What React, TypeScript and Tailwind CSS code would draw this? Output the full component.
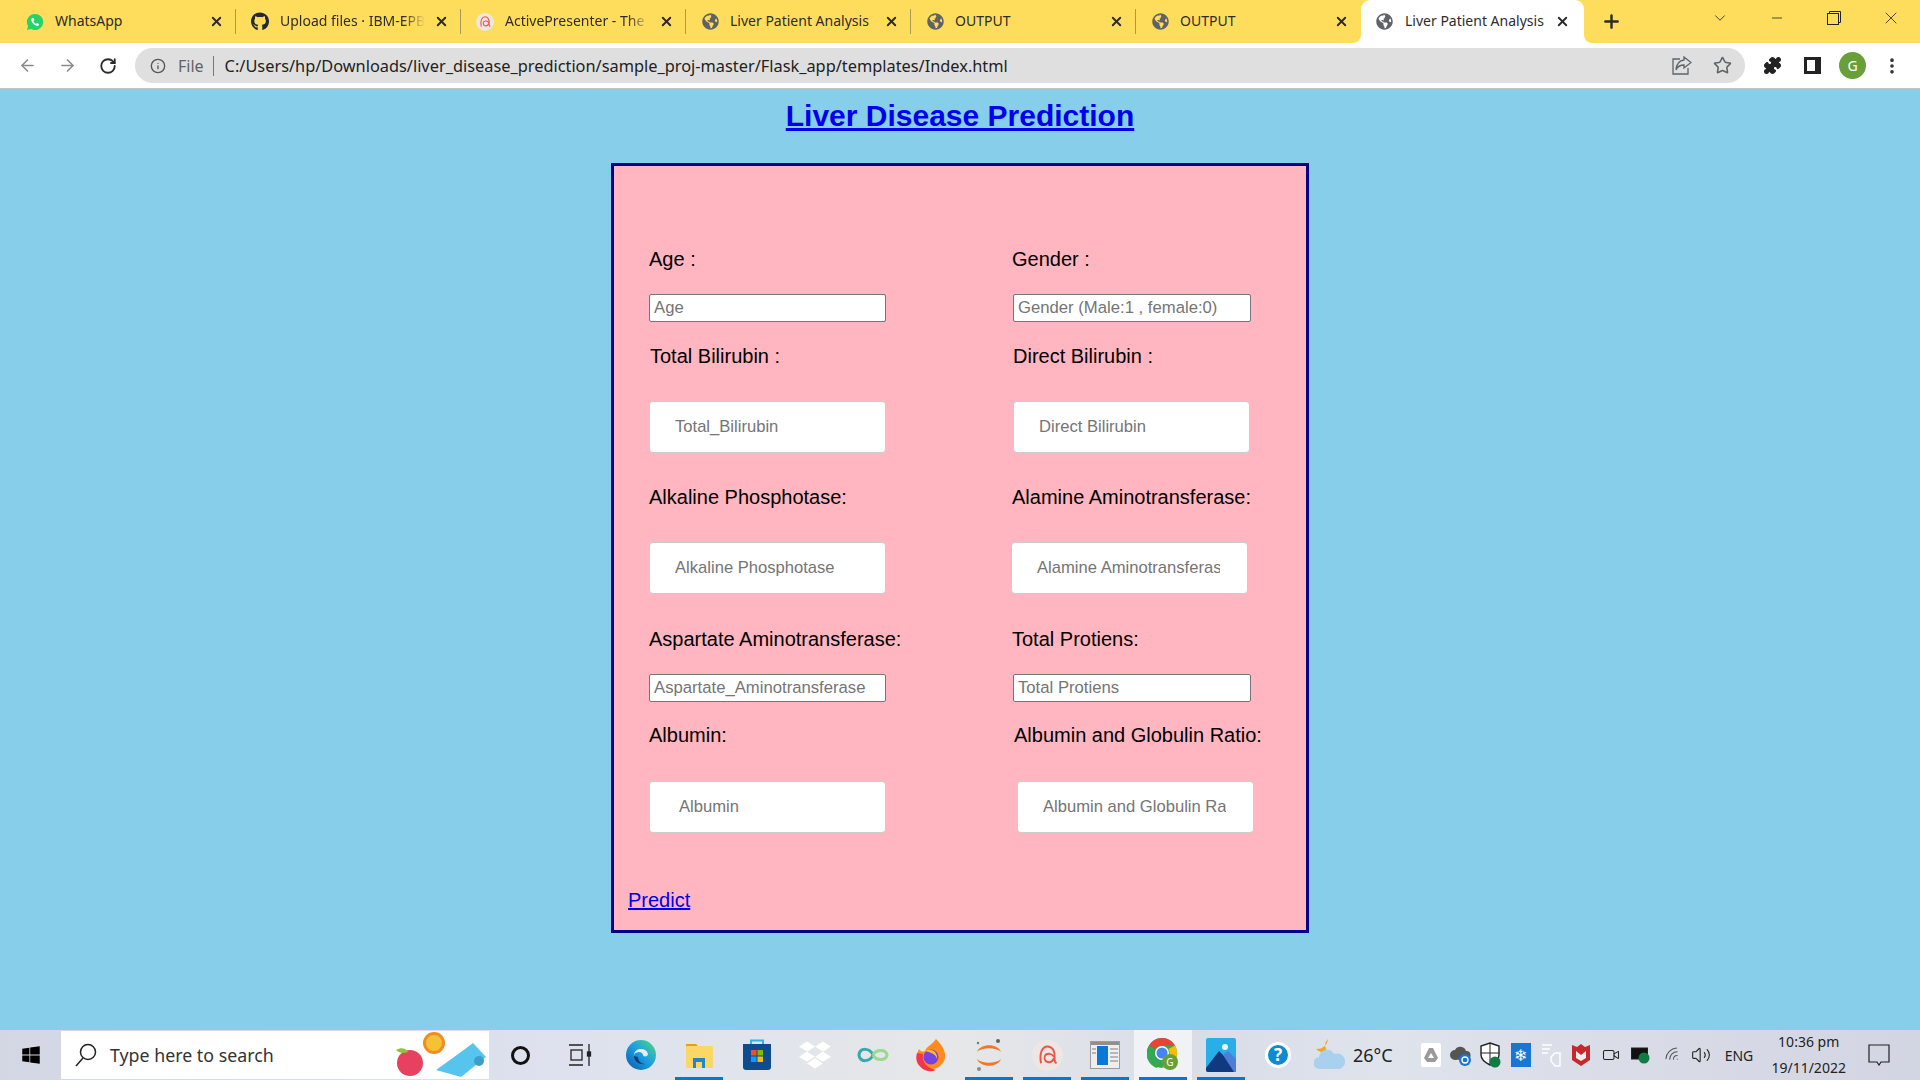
import { ArrowLeft, ArrowRight, RotateCw, Info, Star, X, Plus, ChevronDown, Minus, MoreVertical, Puzzle, Volume2, Wifi, Video } from "lucide-react";
import { FaGithub, FaGlobeAmericas, FaWindows, FaDropbox } from "react-icons/fa";

const uiFont = "[font-family:'Noto_Sans',sans-serif]";
const arial = "[font-family:'Liberation_Sans',Arial,sans-serif]";

function WhatsappIcon() {
  return (
    <svg width="20" height="20" viewBox="0 0 20 20">
      <path d="M10 1 a9 9 0 1 1 -4.4 16.8 L1 19 L2.3 14.6 A9 9 0 0 1 10 1Z" fill="#25d366" />
      <path d="M7 5.5 C5.5 6.5 5.5 8.5 7.5 11.5 C9.5 14 12.5 15 14 13.8 L14.5 12.5 L12.3 11.2 L11.3 12.2 C10 11.7 8.8 10.3 8.2 9 L9.2 8 L8.2 5.5Z" fill="#fff" />
    </svg>
  );
}

function ApIcon({ size }: { size: number }) {
  return (
    <svg width={size} height={size} viewBox="0 0 24 24">
      <circle cx="12" cy="12" r="12" fill="#ede6e3" />
      <path d="M7 18 C5.5 10 8 5 12 5 C16 5 18 9 17.5 14 C17.3 16 18 17.5 19 18 M17 14 C16 16.5 14 17.5 12 17 C9.5 16.5 9 13 10.5 11.5 C12.5 10 15.5 10.5 17 13" fill="none" stroke="#e8574a" strokeWidth="1.5" />
    </svg>
  );
}

const tabs = [
  { title: "WhatsApp", icon: <WhatsappIcon /> },
  { title: "Upload files · IBM-EPB", icon: <FaGithub size={19} className="text-[#24292e]" /> },
  { title: "ActivePresenter - The", icon: <ApIcon size={18} /> },
  { title: "Liver Patient Analysis", icon: <FaGlobeAmericas size={17} className="text-[#5f6368]" /> },
  { title: "OUTPUT", icon: <FaGlobeAmericas size={17} className="text-[#5f6368]" /> },
  { title: "OUTPUT", icon: <FaGlobeAmericas size={17} className="text-[#5f6368]" /> },
];

function TabBar() {
  return (
    <div className="flex h-[43px] bg-[#ffdd5c] pl-[11px]">
      {tabs.map((t, i) => (
        <div key={i} className="flex h-full w-[225px] shrink-0 items-center pl-[15px]">
          <span className="flex w-[18px] shrink-0 justify-center">{t.icon}</span>
          <span className={`mb-[2px] ml-[11px] w-[145px] overflow-hidden whitespace-nowrap text-[14px] text-[#2c2c2c] ${i === 1 || i === 2 ? "[mask-image:linear-gradient(to_right,black_85%,transparent)]" : ""}`}>
            {t.title}
          </span>
          <X size={15} strokeWidth={3} className="ml-[9px] shrink-0 text-[#2b2b2b]" />
          <span className={`ml-[11px] h-[25px] w-px shrink-0 ${i === 5 ? "" : "bg-[#a89a55]"}`} />
        </div>
      ))}
      <div className="relative flex h-full w-[223px] shrink-0 items-center rounded-t-[9px] bg-white pl-[15px]">
        <span className="absolute -left-2 bottom-0 h-2 w-2 bg-white">
          <span className="block h-full w-full rounded-br-[8px] bg-[#ffdd5c]" />
        </span>
        <span className="absolute -right-2 bottom-0 h-2 w-2 bg-white">
          <span className="block h-full w-full rounded-bl-[8px] bg-[#ffdd5c]" />
        </span>
        <FaGlobeAmericas size={17} className="shrink-0 text-[#5f6368]" />
        <span className="mb-[2px] ml-[12px] w-[141px] whitespace-nowrap text-[14px] text-[#2c2c2c]">Liver Patient Analysis</span>
        <X size={15} strokeWidth={3} className="ml-[9px] shrink-0 text-[#2b2b2b]" />
      </div>
      <Plus size={21} strokeWidth={2.8} className="ml-[17px] mt-[11px] shrink-0 text-[#2b2b2b]" />
      <ChevronDown size={18} strokeWidth={1.2} className="ml-[89px] mt-[9px] shrink-0 text-[#333]" />
      <div className="ml-[19px] flex h-[36px] shrink-0 items-center">
        <span className="flex w-[57px] justify-center"><Minus size={16} strokeWidth={1.2} className="text-[#222]" /></span>
        <span className="flex w-[57px] justify-center">
          <svg width="14" height="14" viewBox="0 0 14 14" fill="none" stroke="#222" strokeWidth="1">
            <rect x="0.5" y="2.5" width="11" height="11" />
            <path d="M2.5 2.5 V0.5 H13.5 V11.5 H11.5" />
          </svg>
        </span>
        <span className="flex w-[58px] justify-center"><X size={20} strokeWidth={1} className="text-[#222]" /></span>
      </div>
    </div>
  );
}

function ToolBar() {
  return (
    <div className="flex h-[46px] items-center border-b border-[#c4c4c4] bg-white pl-[18px]">
      <ArrowLeft size={19} strokeWidth={2} className="shrink-0 text-[#8a8a8a]" />
      <ArrowRight size={19} strokeWidth={2} className="ml-[21px] shrink-0 text-[#8a8a8a]" />
      <RotateCw size={18} strokeWidth={2.4} className="ml-[22px] shrink-0 text-[#2b2b2b]" />
      <div className="ml-[18px] flex h-[35px] w-[1610px] shrink-0 items-center rounded-full bg-[#dfdfdf] pl-[15px]">
        <Info size={16} strokeWidth={2} className="text-[#555]" />
        <span className="ml-[12px] pt-[1px] text-[16px] text-[#5f6368]">File</span>
        <span className="ml-[9px] h-[20px] w-px bg-[#777]" />
        <span className="ml-[11px] whitespace-nowrap pt-[1px] text-[16.35px] text-[#222]">
          C:/Users/hp/Downloads/liver_disease_prediction/sample_proj-master/Flask_app/templates/Index.html
        </span>
        <svg width="20" height="19" viewBox="0 0 20 19" fill="none" stroke="#5f6368" strokeWidth="1.3" className="ml-auto">
          <path d="M8 3 H1 V18 H16 V12" />
          <path d="M12 1 L19 6.5 L12 12 V9 C8 9 5.5 10.5 4 14 C4.5 8.5 7.5 4.5 12 4Z" />
        </svg>
        <Star size={19} strokeWidth={2} className="ml-[21px] mr-[13px] text-[#5f6368]" />
      </div>
      <Puzzle size={19} fill="#222" strokeWidth={1.5} className="ml-[18px] shrink-0 text-[#222]" />
      <span className="ml-[22px] flex h-[17px] w-[17px] shrink-0 justify-start border-[3px] border-[#222]">
        <span className="h-full w-[8px] bg-white" />
        <span className="h-full w-[3px] bg-[#222]" />
      </span>
      <span className="ml-[18px] flex h-[27px] w-[27px] shrink-0 items-center justify-center rounded-full bg-[#689f38] text-[14px] text-white">G</span>
      <MoreVertical size={20} strokeWidth={2.4} className="ml-[16px] shrink-0 text-[#333]" />
    </div>
  );
}

type FieldProps = { label: string; placeholder: string; big?: boolean; labelCls?: string; boxCls?: string; gapCls: string };

function Field({ label, placeholder, big, labelCls = "", boxCls = "", gapCls }: FieldProps) {
  return (
    <div className="flex flex-col items-start">
      <label className={`block whitespace-nowrap text-[20px] leading-[23px] text-black ${labelCls}`}>{label}</label>
      {big ? (
        <input
          readOnly
          placeholder={placeholder}
          className={`${gapCls} h-[52px] w-[237px] rounded-[4px] border border-[#ccc] bg-white pr-[27px] text-[16.6px] outline-none placeholder:text-[#757575] ${boxCls || "pl-[25px]"}`}
        />
      ) : (
        <input
          readOnly
          placeholder={placeholder}
          className={`${gapCls} h-[28px] rounded-[2px] border border-[#767676] bg-white px-[4px] pb-[1px] text-[16.7px] outline-none placeholder:text-[#757575] ${boxCls || "w-[237px]"}`}
        />
      )}
    </div>
  );
}

function Panel() {
  return (
    <div className={`mx-auto mt-[30px] h-[770px] w-[698px] border-[3px] border-[#00008b] bg-[#ffb6c1] pt-[82px] ${arial}`}>
      <div className="flex pl-[35px]">
        <div className="w-[363px]"><Field label="Age :" placeholder="Age" gapCls="mt-[23px]" /></div>
        <Field label="Gender :" placeholder="Gender (Male:1 , female:0)" boxCls="w-[238px]" gapCls="mt-[23px] ml-[1px]" />
      </div>
      <div className="mt-[23px] flex pl-[35px]">
        <div className="w-[363px]"><Field label="Total Bilirubin :" placeholder="Total_Bilirubin" big labelCls="ml-[1px]" gapCls="mt-[33px]" /></div>
        <Field label="Direct Bilirubin :" placeholder="Direct Bilirubin" big labelCls="ml-[1px]" gapCls="mt-[33px] ml-[1px]" />
      </div>
      <div className="mt-[33px] flex pl-[35px]">
        <div className="w-[363px]"><Field label="Alkaline Phosphotase:" placeholder="Alkaline Phosphotase" big gapCls="mt-[33px]" /></div>
        <Field label="Alamine Aminotransferase:" placeholder="Alamine Aminotransferase" big gapCls="mt-[33px] ml-[-1px]" />
      </div>
      <div className="mt-[34px] flex pl-[35px]">
        <div className="w-[363px]"><Field label="Aspartate Aminotransferase:" placeholder="Aspartate_Aminotransferase" gapCls="mt-[23px]" /></div>
        <Field label="Total Protiens:" placeholder="Total Protiens" boxCls="w-[238px]" gapCls="mt-[23px] ml-[1px]" />
      </div>
      <div className="mt-[22px] flex pl-[35px]">
        <div className="w-[363px]"><Field label="Albumin:" placeholder="Albumin" big boxCls="pl-[29px]" gapCls="mt-[34px]" /></div>
        <Field label="Albumin and Globulin Ratio:" placeholder="Albumin and Globulin Ratio" big labelCls="ml-[2px]" gapCls="mt-[34px] ml-[5px]" />
      </div>
      <a href="#" className="ml-[14px] mt-[56px] block w-fit text-[20px] leading-[23px] text-[#0000ee] underline">Predict</a>
    </div>
  );
}

function ChromeLogo() {
  return (
    <svg width="32" height="34" viewBox="0 0 32 34">
      <circle cx="15" cy="15" r="15" fill="#34a853" />
      <path d="M15 0 A15 15 0 0 1 28 7.5 H15 A7.5 7.5 0 0 0 8.5 11 L2 7.5 A15 15 0 0 1 15 0Z" fill="#ea4335" />
      <path d="M28 7.5 A15 15 0 0 1 15 30 L21.5 18.7 A7.5 7.5 0 0 0 21.5 11Z" fill="#fbbc05" />
      <path d="M2 7.5 L8.5 18.7 A7.5 7.5 0 0 0 15 22.5 L10 30 A15 15 0 0 1 2 7.5Z" fill="#34a853" />
      <circle cx="15" cy="15" r="7" fill="#fff" />
      <circle cx="15" cy="15" r="5.5" fill="#4285f4" />
      <circle cx="23" cy="24" r="8" fill="#689f38" />
      <text x="23" y="28" textAnchor="middle" fontSize="10" fill="#fff">G</text>
    </svg>
  );
}

function EdgeLogo() {
  return (
    <svg width="32" height="32" viewBox="0 0 32 32">
      <defs>
        <linearGradient id="edge" x1="0" y1="1" x2="1" y2="0">
          <stop offset="0" stopColor="#0c59a4" />
          <stop offset="0.5" stopColor="#1b9de2" />
          <stop offset="1" stopColor="#4fdc7c" />
        </linearGradient>
      </defs>
      <circle cx="16" cy="16" r="15" fill="url(#edge)" />
      <path d="M9 17 a7 6 0 0 1 14 -2 c0 3 -5 3 -5 1 a4 3 0 0 0 -9 1Z" fill="#e8eef6" />
      <path d="M9 17 c0 6 6 9 11 8 c-4 0 -7 -3 -7 -7 Z" fill="#0a3f80" />
    </svg>
  );
}

function FolderIcon() {
  return (
    <svg width="28" height="28" viewBox="0 0 28 28">
      <path d="M1 3 H11 L14 6 H1Z" fill="#e0a30b" />
      <rect x="1" y="5" width="27" height="22" rx="1" fill="#fdd766" />
      <path d="M8 27 V17 H20 V27 H17 V21 H11 V27Z" fill="#1f86d0" />
    </svg>
  );
}

function StoreIcon() {
  return (
    <svg width="30" height="32" viewBox="0 0 30 32">
      <path d="M9 5 V1.5 H21 V5" fill="none" stroke="#2ab5ee" strokeWidth="2" />
      <path d="M1 5 H29 V28 a3 3 0 0 1 -3 3 H4 a3 3 0 0 1 -3 -3Z" fill="#0f4c8f" />
      <rect x="9" y="11" width="5.5" height="5.5" fill="#f25022" />
      <rect x="15.5" y="11" width="5.5" height="5.5" fill="#7fba00" />
      <rect x="9" y="17.5" width="5.5" height="5.5" fill="#00a4ef" />
      <rect x="15.5" y="17.5" width="5.5" height="5.5" fill="#ffb900" />
    </svg>
  );
}

function InfinityIcon() {
  return (
    <svg width="32" height="20" viewBox="0 0 32 20" fill="none" strokeWidth="3">
      <path d="M16 10 C13 3 3 2 2 10 C3 18 13 17 16 10" stroke="#3aa6ad" />
      <path d="M16 10 C19 4 29 4 30 10 C29 16 19 16 16 10" stroke="#9cd98f" />
    </svg>
  );
}

function FirefoxIcon() {
  return (
    <svg width="30" height="34" viewBox="0 0 30 34">
      <path d="M20 1 C27 8 30 14 29 20 A14 13.5 0 1 1 3 11 C5 14 7 14 9 13 C11 8 16 7 20 1Z" fill="#ff8a1e" />
      <path d="M1 15 A14 14 0 0 0 20 32 C10 30 6 24 7 16Z" fill="#f3364c" />
      <circle cx="15" cy="19" r="7.5" fill="#7542e5" />
      <path d="M9 13 C14 10 22 13 21 21 C20 16 14 14 9 13Z" fill="#ffbd2e" />
    </svg>
  );
}

function JupyterIcon() {
  return (
    <svg width="30" height="36" viewBox="0 0 30 36">
      <path d="M3 15 C6 6 24 6 27 15 C22 10 8 10 3 15Z" fill="#f37726" />
      <path d="M3 22 C6 31 24 31 27 22 C22 27 8 27 3 22Z" fill="#f37726" />
      <circle cx="24" cy="4" r="2" fill="#616262" />
      <circle cx="4" cy="6" r="1.2" fill="#757575" />
      <circle cx="5" cy="32" r="2" fill="#8b8b8b" />
    </svg>
  );
}

function WindowIcon() {
  return (
    <svg width="30" height="28" viewBox="0 0 30 28">
      <rect x="0.5" y="0.5" width="29" height="27" fill="#eeeeee" stroke="#9c9c9c" />
      <rect x="1" y="1" width="28" height="3" fill="#8f8f8f" />
      <rect x="7" y="5" width="11" height="19" fill="#0a78d6" />
      <path d="M2 8 H6 M2 12 H6 M20 8 H28 M20 12 H28 M20 16 H28 M20 20 H28" stroke="#a5a5a5" strokeWidth="1.5" />
    </svg>
  );
}

function PhotosIcon() {
  return (
    <svg width="30" height="34" viewBox="0 0 30 34">
      <rect width="30" height="34" rx="2" fill="#29aee8" />
      <circle cx="19" cy="9" r="3" fill="#e8f6fd" />
      <path d="M0 30 L13 13 L30 30 V32 a2 2 0 0 1 -2 2 H2 a2 2 0 0 1 -2 -2Z" fill="#10397f" />
      <path d="M17 17 L22 13 L30 21 V34 H28Z" fill="#4e7fd6" />
    </svg>
  );
}

function HelpIcon() {
  return (
    <span className="flex h-[26px] w-[26px] items-center justify-center rounded-full border-[3px] border-white bg-[#0f8ad2] text-[17px] font-bold text-white">?</span>
  );
}

function SearchArt() {
  return (
    <svg width="92" height="48" viewBox="0 0 92 48" className="mr-[2px] block">
      <circle cx="15" cy="32" r="13" fill="#e8405f" />
      <path d="M1 19 C6 16 11 17 13 21 C8 23 4 22 1 19Z" fill="#8fc33a" />
      <circle cx="39" cy="12" r="11" fill="#f08c24" />
      <circle cx="39" cy="12" r="8" fill="#f6c235" />
      <path d="M41 39 L66 21 L78 12 L91 26 L66 46Z" fill="#57c4ee" />
      <circle cx="84" cy="30" r="5" fill="#3d9fc9" />
    </svg>
  );
}

function TaskSlot({ children, on, active, cls = "" }: { children: React.ReactNode; on?: boolean; active?: boolean; cls?: string }) {
  return (
    <div className={`relative flex h-full w-[58px] shrink-0 items-center justify-center ${active ? "bg-[#f0f2f6]" : ""} ${cls}`}>
      {children}
      {on && <span className="absolute bottom-0 left-[5px] right-[5px] h-[3px] bg-[#0078d7]" />}
    </div>
  );
}

function Tray({ children, w = "w-[30px]" }: { children: React.ReactNode; w?: string }) {
  return <div className={`flex h-full ${w} shrink-0 items-center justify-center`}>{children}</div>;
}

function TaskBar() {
  return (
    <div className="flex h-[50px] items-center bg-[linear-gradient(90deg,#d3d7e4,#dde2ee_30%,#e6e7e8_50%,#d8dde8_62%,#dfe3ec_72%,#d2d5e2)] text-[#222]">
      <div className="flex h-full w-[61px] shrink-0 items-center justify-center"><FaWindows size={20} className="text-black" /></div>
      <div className="flex h-[48px] w-[428px] shrink-0 items-center bg-white pl-[14px]">
        <svg width="22" height="24" viewBox="0 0 22 24" fill="none" stroke="#222" strokeWidth="1.5">
          <circle cx="13" cy="9" r="7.5" />
          <path d="M8 15 L1 23" />
        </svg>
        <span className="ml-[13px] text-[17.8px] text-[#333]">Type here to search</span>
        <span className="ml-auto"><SearchArt /></span>
      </div>
      <div className="ml-[2px] flex h-full shrink-0">
        <TaskSlot><span className="h-[19px] w-[19px] rounded-full border-[3px] border-[#111]" /></TaskSlot>
        <TaskSlot cls="ml-[2px]">
          <svg width="24" height="24" viewBox="0 0 24 24" fill="none" stroke="#222" strokeWidth="1.3">
            <path d="M1 2 H15 M1 22 H15 M21 1 V23" />
            <rect x="3" y="7" width="11" height="10" />
            <rect x="19.5" y="9" width="3" height="4" fill="#222" />
          </svg>
        </TaskSlot>
        <TaskSlot cls="ml-[3px]"><EdgeLogo /></TaskSlot>
        <TaskSlot on><FolderIcon /></TaskSlot>
        <TaskSlot><StoreIcon /></TaskSlot>
        <TaskSlot><FaDropbox size={32} className="text-white" /></TaskSlot>
        <TaskSlot><InfinityIcon /></TaskSlot>
        <TaskSlot><FirefoxIcon /></TaskSlot>
        <TaskSlot on><JupyterIcon /></TaskSlot>
        <TaskSlot on><ApIcon size={31} /></TaskSlot>
        <TaskSlot on><WindowIcon /></TaskSlot>
        <TaskSlot on active><ChromeLogo /></TaskSlot>
        <TaskSlot on><PhotosIcon /></TaskSlot>
        <TaskSlot cls="-ml-[1px]"><HelpIcon /></TaskSlot>
      </div>
      <div className="ml-[7px] flex h-full shrink-0 items-center">
        <svg width="32" height="36" viewBox="0 0 32 36">
          <path d="M14 2 a9 9 0 0 0 -1 12 a9 9 0 0 1 -11 -2 a11 11 0 0 0 12 -10Z" fill="#f4a623" />
          <path d="M6 32 a6 6 0 0 1 -1 -12 a8 8 0 0 1 15 -3 a7.5 7.5 0 0 1 6 15Z" fill="#a9d0ef" />
        </svg>
        <span className="ml-[7px] text-[18px]">26°C</span>
      </div>
      <div className="ml-[23px] flex h-full shrink-0 items-center">
        <Tray>
          <svg width="20" height="24" viewBox="0 0 20 24">
            <rect width="20" height="24" rx="2" fill="#fff" />
            <path d="M8 5 H12 L17 15 L14 19 H6 L3 15Z" fill="#9a9a9a" />
            <path d="M10 10 L13 15 H7Z" fill="#fff" />
          </svg>
        </Tray>
        <Tray>
          <svg width="24" height="22" viewBox="0 0 24 22">
            <path d="M6 16 a5 5 0 0 1 0 -10 a6 6 0 0 1 11 1 a4 4 0 0 1 1 8Z" fill="#555" />
            <circle cx="16" cy="16" r="6" fill="#1976d2" />
            <circle cx="16" cy="16" r="3" fill="none" stroke="#fff" strokeWidth="1.3" />
          </svg>
        </Tray>
        <Tray>
          <svg width="22" height="26" viewBox="0 0 22 26">
            <path d="M10 1 L19 4 V13 C19 18 14 21 10 23 C6 21 1 18 1 13 V4Z" fill="#fff" stroke="#222" strokeWidth="1.4" />
            <path d="M10 1 V23 M1 11 H19" stroke="#222" />
            <circle cx="15" cy="20" r="5.5" fill="#107c41" />
          </svg>
        </Tray>
        <Tray>
          <span className="flex h-[24px] w-[20px] items-center justify-center bg-[#1976d2] text-[16px] leading-none text-white">❄</span>
        </Tray>
        <Tray>
          <svg width="20" height="24" viewBox="0 0 20 24" fill="none" stroke="#fff" strokeWidth="1.4">
            <path d="M1 2 H11 M1 6 H9 M1 10 H7 M10 14 L14 10 H19 V23 H14 L10 18Z" />
          </svg>
        </Tray>
        <Tray>
          <svg width="20" height="24" viewBox="0 0 20 24">
            <path d="M1 2 L6 4 L10 1 L14 4 L19 2 V17 L10 23 L1 17Z" fill="#c8282d" />
            <path d="M5 8 L10 12 L15 8 V15 L10 18 L5 15Z" fill="#eee" />
          </svg>
        </Tray>
        <Tray><Video size={18} strokeWidth={1.4} /></Tray>
        <Tray>
          <svg width="20" height="18" viewBox="0 0 20 18">
            <rect x="0.5" y="2" width="16" height="11" fill="#111" stroke="#222" />
            <circle cx="13" cy="12" r="5.5" fill="#107c41" />
          </svg>
        </Tray>
        <Tray><Wifi size={18} strokeWidth={1.4} className="ml-[4px] rotate-[-45deg] text-[#555]" /></Tray>
        <Tray><Volume2 size={20} strokeWidth={1.3} /></Tray>
        <span className="ml-[9px] w-[36px] text-[14px]">ENG</span>
      </div>
      <div className="ml-[7px] flex w-[82px] shrink-0 flex-col items-center text-[14px] leading-[26px]">
        <span>10:36 pm</span>
        <span>19/11/2022</span>
      </div>
      <svg width="22" height="22" viewBox="0 0 22 22" fill="none" stroke="#222" strokeWidth="1.2" className="ml-[18px] shrink-0">
        <path d="M1 1 H21 V18 H13 L11 21 L9 18 H1Z" />
      </svg>
    </div>
  );
}

export default function App() {
  return (
    <div className="flex h-screen flex-col overflow-hidden bg-[#87ceeb]">
      <div className={uiFont}>
        <TabBar />
        <ToolBar />
      </div>
      <main className="flex-1">
        <h1 className={`mt-[10px] text-center text-[30px] font-bold leading-[34px] text-[#0000ee] underline ${arial}`}>Liver Disease Prediction</h1>
        <Panel />
      </main>
      <div className={uiFont}><TaskBar /></div>
    </div>
  );
}
